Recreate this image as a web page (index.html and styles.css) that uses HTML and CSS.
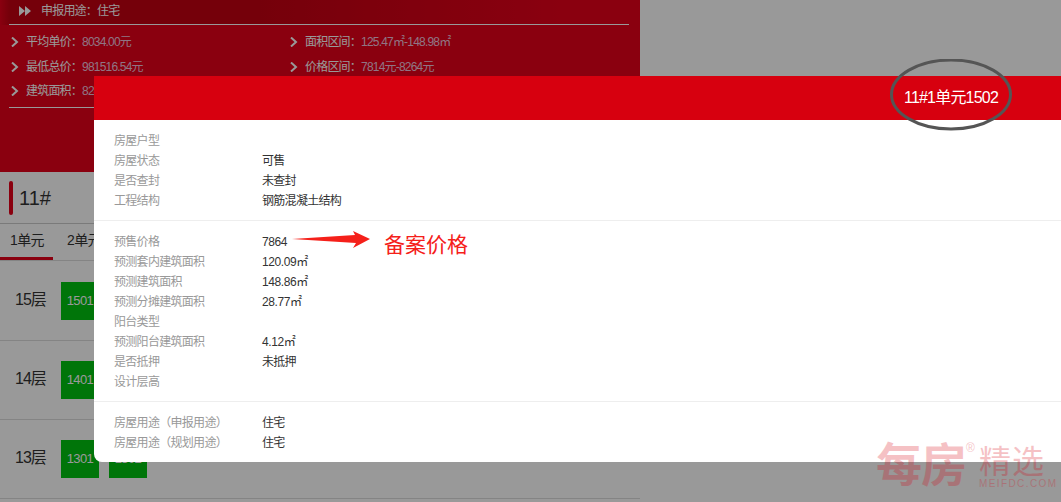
FILE: index.html
```html
<!DOCTYPE html>
<html lang="zh">
<head>
<meta charset="utf-8">
<title>11#1单元1502</title>
<link rel="stylesheet" href="styles.css">
</head>
<body>
<div class="page">
  <header class="summary">
    <div class="use-band"><div class="use-row"><svg class="ff" viewBox="0 0 12 10"><path d="M0 0l6 5-6 5zM6 0l6 5-6 5z"/></svg><span>申报用途：住宅</span></div></div>
    <div class="stats">
      <div class="stat"><svg class="chev" viewBox="0 0 8 10"><path d="M1 .5L6 5 1 9.5"/></svg>平均单价：<b>8034.00元</b></div>
      <div class="stat"><svg class="chev" viewBox="0 0 8 10"><path d="M1 .5L6 5 1 9.5"/></svg>面积区间：<b>125.47㎡-148.98㎡</b></div>
      <div class="stat"><svg class="chev" viewBox="0 0 8 10"><path d="M1 .5L6 5 1 9.5"/></svg>最低总价：<b>981516.54元</b></div>
      <div class="stat"><svg class="chev" viewBox="0 0 8 10"><path d="M1 .5L6 5 1 9.5"/></svg>价格区间：<b>7814元-8264元</b></div>
      <div class="stat"><svg class="chev" viewBox="0 0 8 10"><path d="M1 .5L6 5 1 9.5"/></svg>建筑面积：<b>8246.32㎡</b></div>
    </div>
  </header>
  <div class="building"><i class="mark"></i><span>11#</span></div>
  <nav class="tabs"><span class="tab active">1单元</span><span class="tab">2单元</span></nav>
  <section class="floor"><span class="level">15层</span><span class="room">1501</span></section>
  <section class="floor"><span class="level">14层</span><span class="room">1401</span></section>
  <section class="floor"><span class="level">13层</span><span class="room">1301</span><span class="room">1302</span></section>
</div>

<div class="shade"></div>

<div class="modal">
  <div class="modal-head">11#1单元1502</div>
  <div class="group">
    <div class="row"><span class="label">房屋户型</span></div>
    <div class="row"><span class="label">房屋状态</span><span class="cjk">可售</span></div>
    <div class="row"><span class="label">是否查封</span><span class="cjk">未查封</span></div>
    <div class="row"><span class="label">工程结构</span><span class="cjk">钢筋混凝土结构</span></div>
  </div>
  <div class="group">
    <div class="row"><span class="label">预售价格</span><span class="num">7864</span></div>
    <div class="row"><span class="label">预测套内建筑面积</span><span class="num">120.09㎡</span></div>
    <div class="row"><span class="label">预测建筑面积</span><span class="num">148.86㎡</span></div>
    <div class="row"><span class="label">预测分摊建筑面积</span><span class="num">28.77㎡</span></div>
    <div class="row"><span class="label">阳台类型</span></div>
    <div class="row"><span class="label">预测阳台建筑面积</span><span class="num">4.12㎡</span></div>
    <div class="row"><span class="label">是否抵押</span><span class="cjk">未抵押</span></div>
    <div class="row"><span class="label">设计层高</span></div>
  </div>
  <div class="group">
    <div class="row"><span class="label">房屋用途（申报用途）</span><span class="cjk">住宅</span></div>
    <div class="row"><span class="label">房屋用途（规划用途）</span><span class="cjk">住宅</span></div>
  </div>
</div>

<svg class="ring" viewBox="0 0 124 72"><ellipse cx="62" cy="35.5" rx="59.5" ry="34.5"/></svg>
<svg class="arrow" viewBox="0 0 80 18"><path d="M0 8L63 4 61 0 78 8 61 17 64 12z"/></svg>
<span class="note">备案价格</span>

<div class="brand">
  <span class="brand-main">每房</span><span class="brand-r">®</span>
  <span class="brand-side"><span class="brand-jx">精选</span><span class="brand-url">MEIFDC.COM</span></span>
</div>
</body>
</html>
```

FILE: styles.css
```css
* { box-sizing: border-box; }
html, body { margin: 0; height: 100%; }
body {
  position: relative;
  width: 1061px;
  height: 502px;
  overflow: hidden;
  background: #fff;
  font: 12px/20px "Liberation Sans", "Noto Sans CJK SC", sans-serif;
  color: #333;
}
.page { width: 640px; height: 502px; overflow: hidden; background: #fff; }

.summary {
  height: 172px;
  color: #fff;
  background: #e6001a;
  letter-spacing: -.8px;
}
.use-band {
  height: 25px;
  padding: 0 11px 0 9px;
  background: linear-gradient(90deg, #e6001a 0, #c40012 9px, #c40012 260px, #e6001a 560px);
}
.use-row {
  height: 25px;
  display: flex;
  align-items: center;
  gap: 10px;
  padding: 0 0 3px 10px;
  border-bottom: 1px solid #fff;
}
.ff { width: 12px; height: 10px; fill: #fff; }
.stats {
  display: grid;
  grid-template-columns: 279px 1fr;
  grid-auto-rows: 24.5px;
  height: 83px;
  margin: 0 11px 0 9px;
  padding-top: 5px;
  border-bottom: 1px solid #fff;
}
.stat { display: flex; align-items: center; white-space: nowrap; }
.stat b { font-weight: 400; color: #f0c4dc; }
.chev { width: 8px; height: 10px; margin: 0 7px 0 2px; fill: none; stroke: #fff; stroke-width: 2; }

.building {
  height: 52px;
  display: flex;
  align-items: center;
  gap: 6px;
  padding: 1px 0 0 9px;
  border-bottom: 1px solid #ccc;
  font-size: 20px;
}
.mark { width: 4px; height: 34px; border-radius: 2px; background: #e60019; }
.tabs {
  height: 37px;
  margin-bottom: 1px;
  display: flex;
  gap: 14px;
  border-bottom: 1px solid #ddd;
  font-size: 14px;
  line-height: 32px;
  letter-spacing: -.6px;
}
.tab { width: 53px; }
.tab.active { height: 36px; padding-left: 10px; border-bottom: 3px solid #e60019; }
.floor {
  height: 79px;
  display: flex;
  align-items: center;
  gap: 10px;
  padding-left: 15px;
  border-bottom: 1px solid #ddd;
}
.level { width: 36px; font-size: 16px; line-height: 18px; padding-bottom: 2px; letter-spacing: -1px; }
.room {
  width: 38px;
  height: 38px;
  background: #00c40f;
  color: #fff;
  font-size: 13px;
  line-height: 38px;
  letter-spacing: -.6px;
  text-align: center;
}

.shade { position: absolute; inset: 0; background: rgba(0, 0, 0, .4); }

.modal {
  position: absolute;
  left: 94px;
  top: 76px;
  width: 967px;
  height: 386px;
  background: #fff;
  border-bottom-left-radius: 8px;
  overflow: hidden;
}
.modal-head {
  height: 44px;
  padding-right: 63px;
  background: #d7000f;
  color: #fff;
  font-size: 16px;
  line-height: 44px;
  letter-spacing: -.8px;
  text-align: right;
}
.group { padding: 10px 20px; border-bottom: 1px solid #eee; }
.group:last-child { border-bottom: 0; }
.row { display: flex; height: 20px; line-height: 22px; color: #333; }
.label { width: 148px; color: #999; letter-spacing: -.7px; }
.cjk { letter-spacing: -.7px; }
.num { letter-spacing: -.4px; }

.ring { position: absolute; left: 889px; top: 59px; width: 124px; height: 72px; fill: none; stroke: #555; stroke-width: 3; }
.arrow { position: absolute; left: 292px; top: 231px; width: 80px; height: 18px; fill: #f5201a; }
.note { position: absolute; left: 384px; top: 233px; font-size: 21px; line-height: 24px; color: #f5201a; }

.brand {
  position: absolute;
  left: 876px;
  top: 440px;
  display: flex;
  opacity: .24;
  color: #d7000f;
}
.brand-main { font-size: 46px; line-height: 50px; font-weight: 700; letter-spacing: -1px; }
.brand-r { width: 13px; font-size: 12px; line-height: 16px; }
.brand-side { display: flex; flex-direction: column; padding-top: 6px; }
.brand-jx { font-size: 32px; line-height: 32px; letter-spacing: 1px; }
.brand-url { font-size: 10px; line-height: 12px; letter-spacing: 1.4px; }
```
